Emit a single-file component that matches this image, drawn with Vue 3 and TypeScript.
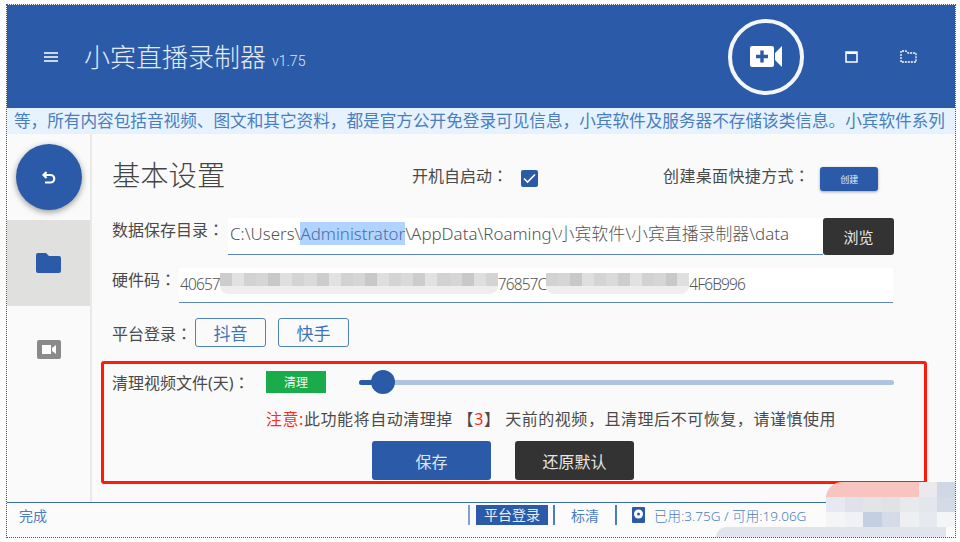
<script setup lang="ts">
const grey = ['#d6d6d6', '#cdcdcd', '#dfdfdf', '#d2d2d2', '#dadada', '#c8c8c8', '#e2e2e2', '#d4d4d4']
const cells = (n: number, seed: number): string[] =>
  Array.from({ length: n }, (_, i) => grey[(i * 5 + seed) % grey.length])
const maskA = cells(23, 1)
const maskB = cells(12, 3)
const cornerTop = ['#f7c4c0', '#f7c4c0', '#f7c4c0', '#f7c4c0', '#f7c4c0', '#ece9ec', '#d0d8e5']
const cornerMid = ['#e6e9f0', '#dfe2ea', '#e2e4e8', '#e0e2e6', '#e8e9ec', '#e3e6ec', '#d4dbe7']
const cornerLow = ['#f4f5f7', '#f0f1f4', '#c4d0e2', '#d5dce8', '#eeeff2', '#e6e9ef', '#f4f5f7']
</script>

<template>
  <div class="window">
    <header class="header">
      <svg class="menu" width="14" height="10" viewBox="0 0 14 10"><path d="M0 1h14M0 5h14M0 9h14" stroke="#fff" stroke-width="1.6" /></svg>
      <h1 class="title">小宾直播录制器</h1>
      <span class="version">v1.75</span>
      <div class="record">
        <svg width="32" height="21" viewBox="0 0 32 21">
          <path fill="#fff" d="M2 0h20a2 2 0 0 1 2 2v17a2 2 0 0 1-2 2H2a2 2 0 0 1-2-2V2a2 2 0 0 1 2-2zM32 0v21l-7-7V7z" />
          <path d="M12 4.500v12M6 10.500h12" stroke="#2b5ba8" stroke-width="3.400" />
        </svg>
      </div>
      <svg class="win-max" width="13" height="12" viewBox="0 0 13 12"><path d="M1 1h11v10H1z" fill="none" stroke="#fff" stroke-width="1.500" /><path d="M1 2h11" stroke="#fff" stroke-width="2" /></svg>
      <svg class="win-folder" width="17" height="13" viewBox="0 0 17 13"><path d="M1 12V1h5l2 2h8v9z" fill="none" stroke="#fff" stroke-width="1.300" stroke-dasharray="2 1" /></svg>
    </header>

    <div class="ticker">等，所有内容包括音视频、图文和其它资料，都是官方公开免登录可见信息，小宾软件及服务器不存储该类信息。小宾软件系列</div>

    <div class="body">
      <aside class="side">
        <div class="fab">
          <svg width="14" height="13" viewBox="0 0 14 13"><path d="M4.500 1 1.500 4l3 3" fill="none" stroke="#fff" stroke-width="2.200" /><path d="M2 4h6.500a3.300 3.300 0 0 1 0 7.500H3" fill="none" stroke="#fff" stroke-width="2.200" /></svg>
        </div>
        <div class="nav active">
          <svg width="25" height="20" viewBox="0 0 25 20"><path fill="#2b5ba8" d="M2 0h8l3 3h10a2 2 0 0 1 2 2v13a2 2 0 0 1-2 2H2a2 2 0 0 1-2-2V2a2 2 0 0 1 2-2z" /></svg>
        </div>
        <div class="nav">
          <svg width="24" height="19" viewBox="0 0 24 19"><rect width="24" height="19" rx="2" fill="#8a8a8a" /><path fill="#fff" d="M5 5h9v9H5zM15 8l4-3v9l-4-3z" /></svg>
        </div>
      </aside>

      <main class="content">
        <div class="row-top">
          <h2 class="heading">基本设置</h2>
          <span class="label autostart">开机自启动<span class="colon">：</span></span>
          <span class="check">
            <svg width="13" height="11" viewBox="0 0 13 11"><path d="M1 5.500 4.500 9 12 1.500" fill="none" stroke="#fff" stroke-width="1.600" /></svg>
          </span>
          <span class="label shortcut">创建桌面快捷方式<span class="colon">：</span></span>
          <button class="btn-create">创建</button>
        </div>

        <div class="row-dir">
          <span class="label dir-label">数据保存目录<span class="colon">：</span></span>
          <div class="field dir-field">C:\Users\<span class="selected">Administrator</span>\AppData\Roaming\小宾软件\小宾直播录制器\data</div>
          <button class="btn-dark browse">浏览</button>
        </div>

        <div class="row-code">
          <span class="label code-label">硬件码<span class="colon">：</span></span>
          <div class="field code-field">
            <span>40657</span>
            <span class="mask mask-a"><i v-for="(c, i) in maskA" :key="i" :style="{ background: c }"></i></span>
            <span>76857C</span>
            <span class="mask mask-b"><i v-for="(c, i) in maskB" :key="i" :style="{ background: c }"></i></span>
            <span>4F6B996</span>
          </div>
        </div>

        <div class="row-platform">
          <span class="label platform-label">平台登录<span class="colon">：</span></span>
          <button class="btn-outline">抖音</button>
          <button class="btn-outline">快手</button>
        </div>

        <section class="clean-box">
          <div class="clean-row">
            <span class="label clean-label">清理视频文件(天)<span class="colon">：</span></span>
            <button class="btn-green">清理</button>
            <div class="slider"><div class="slider-fill"></div><div class="slider-thumb"></div></div>
          </div>
          <p class="note"><span class="red">注意:</span>此功能将自动清理掉 【<span class="red">3</span>】 天前的视频，且清理后不可恢复，请谨慎使用</p>
          <div class="actions">
            <button class="btn-save">保存</button>
            <button class="btn-dark reset">还原默认</button>
          </div>
        </section>
      </main>
    </div>

    <footer class="status">
      <span class="done">完成</span>
      <i class="sep first"></i>
      <span class="login">平台登录</span>
      <i class="sep"></i>
      <span class="quality">标清</span>
      <i class="sep"></i>
      <svg class="disk" width="13" height="16" viewBox="0 0 13 16"><rect width="13" height="16" rx="1" fill="#2b5ba8" /><circle cx="6.500" cy="7" r="4.500" fill="#fff" /><circle cx="6.500" cy="7" r="1.500" fill="#2b5ba8" /></svg>
      <span class="usage">已用:3.75G / 可用:19.06G</span>
    </footer>

    <div class="corner" aria-hidden="true">
      <div class="corner-row pink"><i v-for="(c, i) in cornerTop" :key="i" :style="{ background: c }"></i></div>
      <div class="corner-row"><i v-for="(c, i) in cornerMid" :key="i" :style="{ background: c }"></i></div>
      <div class="corner-row"><i v-for="(c, i) in cornerLow" :key="i" :style="{ background: c }"></i></div>
    </div>
    <div class="strip" aria-hidden="true"></div>
  </div>
</template>

<style>
html, body { margin: 0; background: #fff; }
</style>

<style scoped>
.window {
  position: relative;
  box-sizing: border-box;
  width: 950px;
  height: 534px;
  margin: 4px 0 0 6px;
  border: 1.500px dotted #2b5ba8;
  display: flex;
  flex-direction: column;
  background: #fafafa;
  overflow: hidden;
  color: #444;
  font-family: "Noto Sans", "Noto Sans CJK SC", sans-serif;
}
button { font-family: inherit; border: 0; padding: 0; cursor: pointer; }
h1, h2, p { margin: 0; font-weight: 400; }

.header {
  height: 103px;
  flex: none;
  background: #2b5ba8;
  display: flex;
  align-items: center;
  color: #fff;
}
.menu { margin: 0 0 0 37px; }
.title { margin-left: 26px; font-size: 26px; font-weight: 300; color: #e4ebf5; line-height: 1; }
.version { margin: 8px 0 0 6px; font-size: 14px; font-family: Roboto, sans-serif; font-weight: 300; color: #dde6f3; }
.record {
  box-sizing: border-box;
  width: 76px;
  height: 76px;
  border: 4px solid #f4f6fa;
  border-radius: 50%;
  margin-left: 423px;
  display: flex;
  align-items: center;
  justify-content: center;
}
.win-max { margin-left: 41px; }
.win-folder { margin-left: 42px; }

.ticker {
  height: 26px;
  flex: none;
  background: #e6f3ff;
  color: #4a7dbd;
  font-size: 16.640px;
  line-height: 26px;
  padding-left: 7px;
  white-space: nowrap;
  overflow: hidden;
}

.body { flex: 1; display: flex; min-height: 0; }
.side {
  width: 85px;
  flex: none;
  box-sizing: border-box;
  border-right: 2px solid #e9e9e9;
  display: flex;
  flex-direction: column;
}
.fab {
  width: 66px;
  height: 66px;
  margin: 10px 0 10px 9px;
  border-radius: 50%;
  background: #2b5ba8;
  box-shadow: 0 2px 6px rgba(0, 0, 0, .4);
  display: flex;
  align-items: center;
  justify-content: center;
  flex: none;
}
.nav { height: 86px; flex: none; display: flex; align-items: center; justify-content: center; }
.nav.active { background: #e0e0de; }

.content { flex: 1; min-width: 0; display: flex; flex-direction: column; padding-left: 20px; }
.label { font-size: 16px; color: #4a4a4a; white-space: nowrap; }
.colon { font-family: "Noto Sans CJK TC", sans-serif; }
.row-top { height: 84px; flex: none; display: flex; align-items: center; }
.heading { font-size: 28.300px; font-weight: 300; color: #444; width: 300px; margin-bottom: 6px; }
.autostart { margin-bottom: 2px; }
.check {
  width: 17px; height: 17px; margin: 4px 0 0 13px; background: #2b5ba8; border-radius: 2px;
  display: flex; align-items: center; justify-content: center;
}
.shortcut { margin-left: 125px; letter-spacing: .35px; margin-bottom: 2px; }
.btn-create {
  width: 58px; height: 24px; margin: 6px 0 0 10px; background: #2b5ba8; color: #e8eef7;
  font-size: 9px; border-radius: 3px; box-shadow: 0 1px 3px rgba(0, 0, 0, .35);
}

.row-dir { display: flex; height: 37px; flex: none; }
.dir-label { line-height: 22px; }
.field { background: #fff; color: #555; font-size: 16.900px; font-weight: 300; box-sizing: border-box; border-bottom: 1.500px solid #5d87c2; white-space: nowrap; }
.dir-field { width: 595px; margin-left: 4px; padding: 4px 0 0 2px; line-height: 24px; }
.selected { background: #b0d3ff; color: #4a6ea8; }
.btn-dark { background: #333; color: #e6e6e6; border-radius: 3px; }
.browse { width: 71px; height: 37px; font-size: 15px; }

.row-code { display: flex; height: 35px; flex: none; margin-top: 13px; }
.code-label { line-height: 22px; }
.code-field {
  width: 714px; margin-left: 3px; padding: 4px 0 0 1px; display: flex; align-items: flex-start;
  line-height: 24px; font-size: 15.500px; letter-spacing: -.9px;
}
.mask { position: relative; display: flex; height: 21px; margin-top: 1px; flex: none; }
.mask i { flex: 1; height: 13px; }
.mask::after { content: ""; position: absolute; left: 0; right: 0; top: 13px; height: 8px; background: #eeeeee; border-radius: 0 0 8px 8px; }
.mask-a { width: 278px; }
.mask-b { width: 143px; }

.row-platform { display: flex; align-items: center; height: 29px; flex: none; margin-top: 15px; }
.platform-label { width: 83px; }
.btn-outline {
  width: 71px; height: 29px; margin-right: 12px; background: #fafafa; color: #3f73b8;
  border: 1.500px solid #4f80c0; border-radius: 3px; font-size: 17px; box-sizing: border-box;
}

.clean-box {
  box-sizing: border-box;
  width: 826px;
  height: 123px;
  margin: 14px 0 0 -11px;
  border: 3.500px solid #ff1a0a;
  border-radius: 3px;
  padding-left: 8px;
  flex: none;
}
.clean-row { display: flex; align-items: center; height: 22px; margin-top: 7px; }
.clean-label { width: 154px; }
.btn-green { width: 60px; height: 22px; background: #1aab4a; color: #f2faf4; font-size: 12px; }
.slider { position: relative; width: 535px; height: 5px; margin-left: 33px; border-radius: 3px; background: #adc3e0; }
.slider-fill { width: 24px; height: 5px; border-radius: 3px; background: #2b5ba8; }
.slider-thumb {
  position: absolute; left: 12px; top: -10px; width: 24px; height: 24px; border-radius: 50%; background: #2b5ba8;
}
.note { font-size: 16px; line-height: 24px; margin: 14px 0 0 154px; color: #4a4a4a; white-space: nowrap; letter-spacing: .55px; }
.red { color: #ff2a1a; }
.actions { display: flex; margin: 10px 0 0 260px; }
.btn-save { width: 119px; height: 39px; background: #2b5ba8; color: #dde6f3; border-radius: 3px; font-size: 16px; }
.reset { width: 119px; height: 39px; margin-left: 24px; font-size: 16px; }

.status {
  height: 35px;
  flex: none;
  box-sizing: border-box;
  border-top: 1.500px solid #3a6cb5;
  background: #fbfbfb;
  display: flex;
  align-items: center;
  color: #4a7dbd;
  font-size: 14px;
  padding: 0 0 10px 12px;
}
.done { width: 449px; }
.sep { width: 2px; height: 20px; background: #4a7dbd; flex: none; }
.sep.first { background: #7ea2d2; }
.login { margin: 0 5px 0 6px; width: 72px; height: 20px; line-height: 20px; text-align: center; background: #2b5ba8; color: #e8eef7; }
.quality { width: 60px; text-align: center; }
.disk { margin-left: 15px; }
.usage { margin-left: 9px; font-size: 13.500px; font-weight: 300; white-space: nowrap; }

.corner { position: absolute; right: -1px; top: 477px; width: 130px; height: 45px; display: flex; flex-direction: column; border-radius: 16px 0 0 0; overflow: hidden; }
.corner-row { flex: 1; display: flex; }
.corner-row i { flex: 1; }
.strip { position: absolute; left: 709px; bottom: -2px; width: 230px; height: 12px; background: #e0e4ec; border-radius: 10px 0 0 0; }
</style>
